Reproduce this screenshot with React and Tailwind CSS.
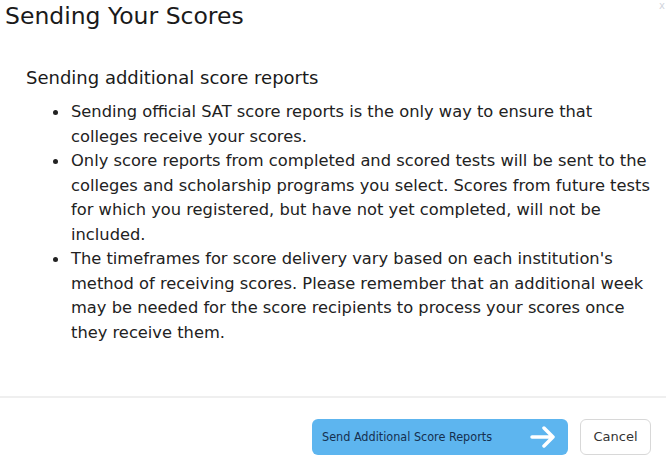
const bullets = [
  ['Sending official SAT score reports is the only way to ensure that', 'colleges receive your scores.'],
  [
    'Only score reports from completed and scored tests will be sent to the',
    'colleges and scholarship programs you select. Scores from future tests',
    'for which you registered, but have not yet completed, will not be',
    'included.',
  ],
  [
    "The timeframes for score delivery vary based on each institution's",
    'method of receiving scores. Please remember that an additional week',
    'may be needed for the score recipients to process your scores once',
    'they receive them.',
  ],
]

export default function App() {
  return (
    <div className="w-[666px] h-[470px] bg-white text-[#222] relative overflow-hidden" style={{ fontFamily: '"DejaVu Sans", Verdana, sans-serif' }}>
      <span className="absolute right-[1px] top-[-2px] text-[10px] text-gray-300">x</span>

      {/* Title */}
      <h1 className="pl-[5px] pt-[1px] text-[23.5px] leading-[30px] text-[#1a1a1a]">Sending Your Scores</h1>

      {/* Body */}
      <div className="pl-[26px] pt-[34px] h-[365px]">
        <h2 className="text-[18px] leading-[26px] text-[#1a1a1a]">Sending additional score reports</h2>
        <ul className="mt-[9px] pl-[27px] text-[16.3px] leading-[24.5px]">
          {bullets.map((lines, i) => (
            <li key={i} className="flex whitespace-nowrap">
              <span className="w-[18px] shrink-0 flex pt-[10px]">
                <span className="w-[5px] h-[5px] rounded-full bg-[#222]" />
              </span>
              <div>
                {lines.map((l, j) => (
                  <span key={j} className="block">{l}</span>
                ))}
              </div>
            </li>
          ))}
        </ul>
      </div>

      {/* Footer */}
      <div className="border-t-2 border-[#efefef] flex justify-end items-center gap-[12px] pt-[21px] pr-[15px]">
        <button
          className="w-[256px] h-[36px] rounded-[6px] bg-[#5db5ef] flex items-center justify-between pl-[10px] pr-[12px] text-[12.5px] text-[#15304f]"
          style={{ fontFamily: '"DejaVu Sans Condensed", "DejaVu Sans", sans-serif' }}
        >
          <span>Send Additional Score Reports</span>
          <svg width="26" height="22" viewBox="0 0 26 22" fill="none" stroke="white" strokeWidth="3.5" strokeLinecap="round" strokeLinejoin="round">
            <path d="M2 11h21M14 2l9 9-9 9" />
          </svg>
        </button>
        <button className="w-[71px] h-[36px] rounded-[6px] bg-white border border-[#d8d8d8] text-[13px] text-[#333]">Cancel</button>
      </div>
    </div>
  )
}
